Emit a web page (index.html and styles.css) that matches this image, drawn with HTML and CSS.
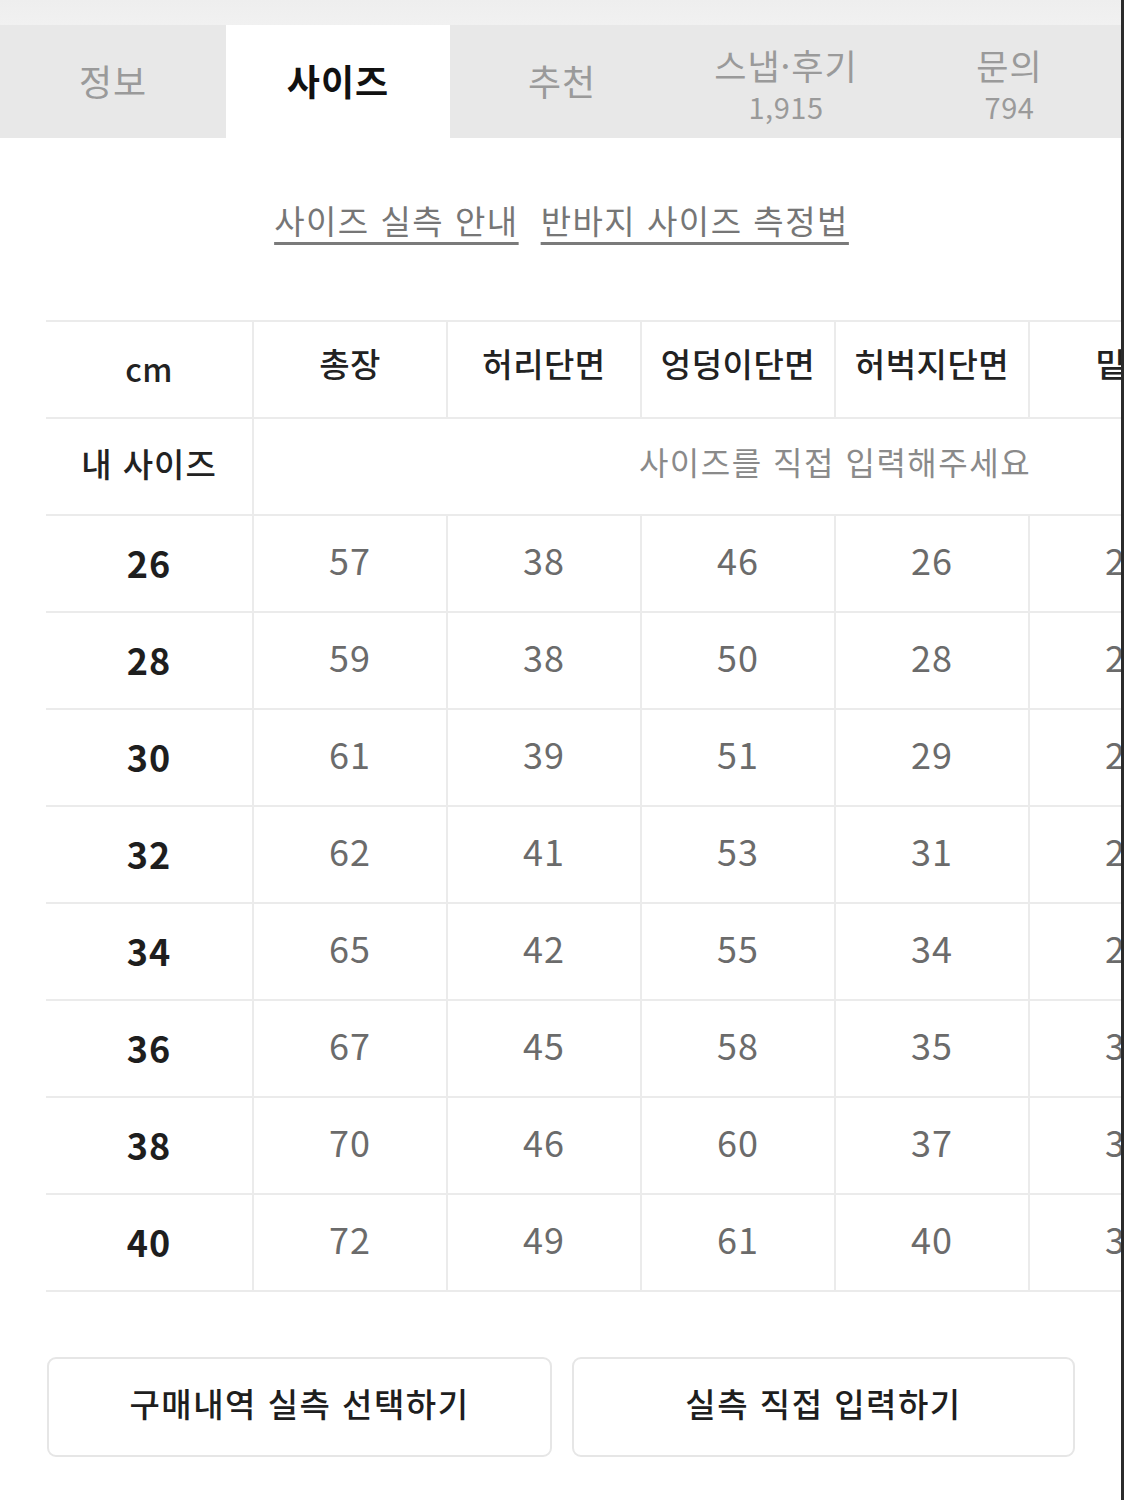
FILE: index.html
```html
<!DOCTYPE html>
<html lang="ko">
<head>
<meta charset="utf-8">
<title>사이즈</title>
<link rel="stylesheet" href="styles.css">
</head>
<body>
<div class="page">
  <div class="topband"></div>
  <nav class="tabs">
    <div class="tab">정보</div>
    <div class="tab active">사이즈</div>
    <div class="tab">추천</div>
    <div class="tab two"><span>스냅·후기</span><span class="count">1,915</span></div>
    <div class="tab two"><span>문의</span><span class="count">794</span></div>
  </nav>
  <div class="links">
    <a class="link">사이즈 실측 안내</a>
    <a class="link">반바지 사이즈 측정법</a>
  </div>
  <div class="table-wrap">
    <table class="size-table">
      <colgroup>
        <col class="c-first"><col class="c"><col class="c"><col class="c"><col class="c"><col class="c"><col class="c">
      </colgroup>
      <tr class="head">
        <td class="first unit">cm</td><td>총장</td><td>허리단면</td><td>엉덩이단면</td><td>허벅지단면</td><td>밑위</td><td>밑단단면</td>
      </tr>
      <tr>
        <td class="first label">내 사이즈</td><td class="input" colspan="6">사이즈를 직접 입력해주세요</td>
      </tr>
      <tr><td class="first size">26</td><td>57</td><td>38</td><td>46</td><td>26</td><td>27</td><td>22</td></tr>
      <tr><td class="first size">28</td><td>59</td><td>38</td><td>50</td><td>28</td><td>28</td><td>23</td></tr>
      <tr><td class="first size">30</td><td>61</td><td>39</td><td>51</td><td>29</td><td>28</td><td>24</td></tr>
      <tr><td class="first size">32</td><td>62</td><td>41</td><td>53</td><td>31</td><td>29</td><td>25</td></tr>
      <tr><td class="first size">34</td><td>65</td><td>42</td><td>55</td><td>34</td><td>29</td><td>26</td></tr>
      <tr><td class="first size">36</td><td>67</td><td>45</td><td>58</td><td>35</td><td>30</td><td>27</td></tr>
      <tr><td class="first size">38</td><td>70</td><td>46</td><td>60</td><td>37</td><td>31</td><td>28</td></tr>
      <tr><td class="first size">40</td><td>72</td><td>49</td><td>61</td><td>40</td><td>32</td><td>29</td></tr>
    </table>
  </div>
  <div class="actions">
    <button class="btn">구매내역 실측 선택하기</button>
    <button class="btn">실측 직접 입력하기</button>
  </div>
</div>
</body>
</html>
```
FILE: styles.css
```css
* { box-sizing: border-box; }
html, body { margin: 0; padding: 0; background: #ffffff; }
body {
  font-family: "Noto Sans CJK KR", "Noto Sans", sans-serif;
  color: #222222;
}
.page {
  width: 1124px;
  min-height: 1500px;
  border-right: 3px solid #2b2b2b;
  overflow: hidden;
  background: #ffffff;
}
.topband {
  height: 25px;
  background: linear-gradient(#eeeeee, #f1f1f1);
}
.tabs {
  display: grid;
  grid-template-columns: 226px 224px 224px 224px 223px;
  height: 113px;
  background: #e8e8e8;
}
.tab {
  display: flex;
  flex-direction: column;
  align-items: center;
  justify-content: center;
  font-size: 36px;
  letter-spacing: 1px;
  color: #9a9a9a;
  line-height: 44px;
  padding-bottom: 4px;
}
.tab.active {
  background: #ffffff;
  color: #111111;
  font-weight: 700;
}
.tab.two { line-height: 43px; font-size: 35px; padding-top: 6px; padding-bottom: 0; }
.tab .count { font-size: 29px; line-height: 40px; color: #9a9a9a; letter-spacing: 0.5px; }
.links {
  display: flex;
  justify-content: center;
  gap: 22px;
  padding-top: 60px;
  padding-left: 2px;
  height: 182px;
}
.link {
  font-size: 33px;
  line-height: 44px;
  height: 46px;
  letter-spacing: 1.5px;
  color: #767676;
  text-decoration: underline;
  text-decoration-thickness: 3px;
  text-underline-offset: 8px;
  text-decoration-color: #7a7a7a;
}
.table-wrap {
  padding-left: 46px;
  width: 1121px;
  overflow: hidden;
}
.size-table {
  table-layout: fixed;
  border-collapse: collapse;
  width: 1370px;
}
.c-first { width: 207px; }
.c { width: 194px; }
.size-table td {
  height: 97px;
  border: 2px solid #ebebeb;
  text-align: center;
  vertical-align: middle;
  font-size: 36px;
  letter-spacing: 1px;
  color: #6b6b6b;
  padding: 0 0 10px 0;
  white-space: nowrap;
}
.size-table td.first { border-left: none; }
.size-table tr.head td {
  font-size: 33px;
  font-weight: 500;
  color: #222222;
  letter-spacing: 0.5px;
  padding-bottom: 14px;
}
.size-table tr.head td.unit { font-size: 32px; padding-bottom: 4px; }
.size-table td.label {
  font-size: 33px;
  font-weight: 500;
  color: #222222;
  padding-bottom: 8px;
}
.size-table td.input {
  font-size: 32px;
  letter-spacing: 1.5px;
  color: #8a8a8a;
  padding-bottom: 12px;
}
.size-table td.size {
  font-weight: 700;
  color: #1e1e1e;
  padding-bottom: 4px;
}
.actions {
  display: grid;
  grid-template-columns: 505px 503px;
  gap: 20px;
  padding: 0 46px 0 47px;
  margin-top: 65px;
}
.btn {
  height: 100px;
  background: #ffffff;
  border: 2px solid #e6e6e6;
  border-radius: 9px;
  font-family: "Noto Sans CJK KR", "Noto Sans", sans-serif;
  font-size: 33px;
  font-weight: 500;
  letter-spacing: 1.5px;
  color: #1e1e1e;
  padding: 0 0 8px 0;
}
```
